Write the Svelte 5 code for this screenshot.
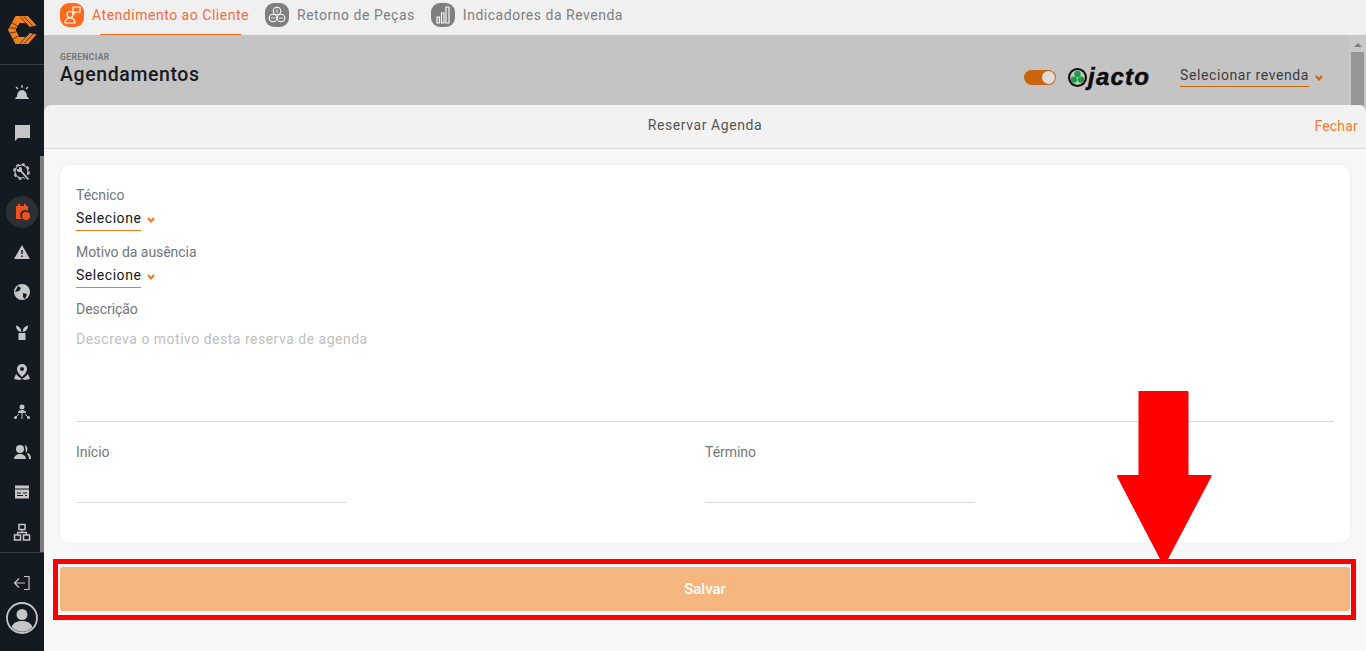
<script>
  const tabs = [
    { label: 'Atendimento ao Cliente', active: true, kind: 'person' },
    { label: 'Retorno de Peças', active: false, kind: 'hex' },
    { label: 'Indicadores da Revenda', active: false, kind: 'bars' }
  ];
  const navTop = ['alarm', 'chat', 'gear', 'calendar', 'warn', 'globe', 'plant', 'pin', 'tree', 'users', 'date', 'org'];
</script>

{#snippet chevron(color)}
  <svg class="chev" width="8" height="6" viewBox="0 0 8 6" fill="none" stroke={color} stroke-width="2">
    <path d="M1 1l3 3.500L7 1" />
  </svg>
{/snippet}

<div class="app">
  <aside class="sidebar">
    <div class="logo">
      <svg width="30" height="30" viewBox="0 0 30 30">
        <path d="M8.500 1h12.500l8.500 9.500-7 1.500-4-4h-6l-4 7 4 7h6l4-4 7 1.500-8.500 9.500H8.500L1 15z" fill="#f0801a" />
        <path d="M13 1.500l9 10M17 1.500l9 10M5 8l7 4M3 13h6M3 18l6-1M6 24l7-4M13 28.500l9-9.500M17 28.500l9-9.500" stroke="#141a22" stroke-width="0.700" fill="none" />
      </svg>
    </div>
    <nav class="nav">
      {#each navTop as item}
        <div class="nav-item" class:current={item === 'calendar'}>
          <svg width="18" height="18" viewBox="0 0 18 18" fill={item === 'calendar' ? '#f4511e' : '#c4c6c8'}>
            {#if item === 'alarm'}
              <path d="M2 16l1-2h1c0-4 2-7 5-7s5 3 5 7h1l1 2z" />
              <path d="M9 2v3M3 4l2 2M15 4l-2 2" stroke="#c4c6c8" stroke-width="1.300" />
            {:else if item === 'chat'}
              <path d="M2 2h15v13H5l-3 3z" />
            {:else if item === 'gear'}
              <circle cx="8.500" cy="8.500" r="6.500" fill="none" stroke="#c4c6c8" stroke-width="1.200" />
              <circle cx="8.500" cy="8.500" r="7.600" fill="none" stroke="#c4c6c8" stroke-width="1.500" stroke-dasharray="3 3" />
              <path d="M6.500 6.500l9 10" stroke="#141a22" stroke-width="4" />
              <path d="M6.500 6.500l9 10" stroke="#c4c6c8" stroke-width="1.800" />
              <circle cx="6.300" cy="6.300" r="2.600" />
              <circle cx="5" cy="5" r="1.300" fill="#141a22" />
            {:else if item === 'calendar'}
              <path d="M3 3h2V1h2v2h4V1h2v2h2v5a5 5 0 0 0-6 8H3z" />
              <circle cx="13" cy="13" r="4" />
            {:else if item === 'warn'}
              <path d="M9 2l8 14H1z" />
              <path d="M9 7v4M9 12.500v1.500" stroke="#141a22" stroke-width="1.500" />
            {:else if item === 'globe'}
              <circle cx="9" cy="9" r="8" />
              <path d="M5 3l3 2-2 3-4 1zM10 10l4 1-2 5-2-2z" fill="#141a22" />
            {:else if item === 'plant'}
              <path d="M5.500 10h7v7h-7z" />
              <path d="M8.500 9C8 5 6 3 3 2.500 3 6 5 9 8.500 9zM9.500 9c.5-4 2.500-6 5.500-6.500C15 6 13 9 9.500 9z" />
            {:else if item === 'pin'}
              <path d="M9 1a5 5 0 0 1 5 5c0 3-3 6-5 8-2-2-5-5-5-8a5 5 0 0 1 5-5z" />
              <circle cx="9" cy="6" r="2" fill="#141a22" />
              <path d="M3 11l3 3 3 2 3-2 3-3 2 5-5 1-3-1-3 1-5-1z" />
            {:else if item === 'tree'}
              <circle cx="9" cy="4" r="2.500" />
              <path d="M5 10c0-2 2-3 4-3s4 1 4 3z" />
              <path d="M9 10v6M3 14l3-3M15 14l-3-3" stroke="#c4c6c8" stroke-width="1" />
              <circle cx="2.500" cy="14.500" r="1.500" />
              <circle cx="15.500" cy="14.500" r="1.500" />
            {:else if item === 'users'}
              <circle cx="7" cy="6" r="4" />
              <path d="M1 16c0-3 3-5 6-5s6 2 6 5z" />
              <path d="M12 2c3 1 3 6 1 8M15 10c2 1 3 3 3 6h-2c0-2-1-4-2-5z" />
            {:else if item === 'date'}
              <path d="M2 2.500h14v13H2z" />
              <path d="M2 6h14" stroke="#141a22" stroke-width="1" />
              <path d="M4 10h4M10 10h4M4 12.500h6M12 12.500h2" stroke="#141a22" stroke-width="1" />
            {:else}
              <path d="M6 1.500h6v5H6zM1.500 12h6v5h-6zM10.500 12h6v5h-6z" fill="none" stroke="#c4c6c8" stroke-width="1.500" />
              <path d="M9 6.500V9.500H4.500V12M9 9.500h4.500V12" fill="none" stroke="#c4c6c8" stroke-width="1.300" />
            {/if}
          </svg>
        </div>
      {/each}
      <div class="side-scroll"></div>
    </nav>
    <div class="side-bottom">
      <svg class="logout" width="18" height="16" viewBox="0 0 18 16" fill="none" stroke="#c4c6c8" stroke-width="1.200">
        <path d="M11 1.500h5v13h-5M12 8H1.500M6 3.500L1.500 8 6 12.500" />
      </svg>
      <svg width="32" height="32" viewBox="0 0 32 32">
        <circle cx="16" cy="16" r="15" fill="none" stroke="#c4c6c8" stroke-width="1.800" />
        <circle cx="16" cy="12.500" r="5.500" fill="#c4c6c8" />
        <path d="M5.500 25c2-4.500 6-6 10.500-6s8.500 1.500 10.500 6a14 14 0 0 1-21 0z" fill="#c4c6c8" />
      </svg>
    </div>
  </aside>

  <main class="main">
    <div class="tabs">
      {#each tabs as tab}
        <div class="tab" class:active={tab.active}>
          <span class="tab-icon">
            <svg width="20" height="20" viewBox="0 0 20 20" fill="none" stroke="#fff" stroke-width="1.100">
              {#if tab.kind === 'person'}
                <circle cx="8" cy="9.500" r="3" />
                <path d="M3 18c0-3.500 2-5 5-5s5 1.500 5 5z" />
                <path d="M11 2h7v5h-4l-2 1.500V7h-1z" />
              {:else if tab.kind === 'hex'}
                <circle cx="10" cy="6" r="3.800" />
                <circle cx="6" cy="13" r="3.800" />
                <circle cx="14" cy="13" r="3.800" />
                <path d="M10 4v4M4 13h4M12 13h4" stroke-width="0.800" />
              {:else}
                <path d="M4 12h2.500v6H4zM8.500 8H11v10H8.500zM13 2h3v16h-3z" />
              {/if}
            </svg>
          </span>
          <span class="tab-label">{tab.label}</span>
        </div>
      {/each}
    </div>

    <header class="page-head">
      <div class="titles">
        <small>GERENCIAR</small>
        <h1>Agendamentos</h1>
      </div>
      <div class="head-right">
        <span class="toggle"><span class="knob"></span></span>
        <svg class="clover" width="19" height="19" viewBox="1 1 18 18">
          <circle cx="10" cy="10" r="9" fill="#0b0b0b" />
          <circle cx="10" cy="10" r="7" fill="#c4c4c4" />
          <circle cx="10" cy="6.600" r="3" fill="#1f9b45" />
          <circle cx="6.700" cy="12" r="3" fill="#1f9b45" />
          <circle cx="13.300" cy="12" r="3" fill="#1f9b45" />
        </svg>
        <span class="brand">jacto</span>
        <div class="revenda">
          <span class="revenda-text">Selecionar revenda</span>
          {@render chevron('#c9650f')}
        </div>
      </div>
      <div class="head-scroll">
        <span class="scroll-up"></span>
        <div class="thumb"></div>
      </div>
    </header>

    <section class="modal">
      <div class="modal-head">
        <span class="modal-title">Reservar Agenda</span>
        <span class="close">Fechar</span>
      </div>
      <div class="modal-body">
        <form class="card">
          <div class="field">
            <span class="label">Técnico</span>
            <div class="select"><span class="select-text">Selecione</span>{@render chevron('#f07a16')}</div>
          </div>
          <div class="field">
            <span class="label">Motivo da ausência</span>
            <div class="select"><span class="select-text">Selecione</span>{@render chevron('#f07a16')}</div>
          </div>
          <div class="field desc">
            <span class="label">Descrição</span>
            <span class="placeholder">Descreva o motivo desta reserva de agenda</span>
          </div>
          <div class="dates">
            <div class="date-field">
              <span class="label">Início</span>
              <div class="date-line"></div>
            </div>
            <div class="date-field">
              <span class="label">Término</span>
              <div class="date-line"></div>
            </div>
          </div>
        </form>
        <button class="save" type="button">Salvar</button>
      </div>
    </section>
  </main>

  <div class="mark-box"></div>
  <svg class="mark-arrow" width="96" height="172" viewBox="0 0 96 172">
    <path d="M22.500 0h49a1 1 0 0 1 1 1v83h22a1 1 0 0 1 1 1.500L52 168h-8L1 85.500A1 1 0 0 1 2 84h20.500V1a1 1 0 0 1 0-1z" fill="#ff0000" />
  </svg>
</div>

<style>
  :global(body) {
    margin: 0;
    overflow: hidden;
  }

  .app {
    position: relative;
    display: flex;
    width: 1366px;
    height: 651px;
    overflow: hidden;
    font-family: 'Roboto', 'Liberation Sans', sans-serif;
    background: #f7f7f7;
  }

  .sidebar {
    display: flex;
    flex-direction: column;
    flex: 0 0 44px;
    background: #141a22;
  }

  .logo {
    display: flex;
    flex: 0 0 65px;
    align-items: center;
    justify-content: center;
    padding-bottom: 5px;
    box-sizing: border-box;
    border-bottom: 1px solid #3a3d42;
  }

  .nav {
    position: relative;
    display: flex;
    flex: 0 0 487px;
    flex-direction: column;
    align-items: center;
    padding-top: 7px;
    box-sizing: border-box;
    border-bottom: 1px solid #3a3d42;
  }

  .nav-item {
    display: flex;
    flex: 0 0 40px;
    align-items: center;
    justify-content: center;
    width: 32px;
    height: 40px;
    margin-left: -1px;
  }

  .nav-item.current {
    flex: 0 0 32px;
    height: 32px;
    margin: 4px 0 4px -1px;
    border-radius: 50%;
    background: #2c2f33;
  }

  .side-scroll {
    position: absolute;
    right: 0;
    top: 91px;
    width: 4px;
    height: 396px;
    background: #7d7d7d;
  }

  .side-bottom {
    display: flex;
    flex: 1;
    flex-direction: column;
    align-items: center;
    gap: 11px;
    padding-top: 22px;
  }

  .main {
    display: flex;
    flex: 1;
    flex-direction: column;
    min-width: 0;
    background: #c4c4c4;
  }

  .tabs {
    display: flex;
    flex: 0 0 35px;
    padding-left: 16px;
    gap: 16px;
    box-sizing: border-box;
    background: #f0f0f0;
  }

  .tab {
    display: flex;
    align-items: flex-start;
    gap: 8px;
    padding-top: 3px;
    color: #7f7f7f;
    font-size: 14px;
    letter-spacing: 0.52px;
  }

  .tab-icon {
    display: flex;
    align-items: center;
    justify-content: center;
    width: 24px;
    height: 24px;
    border-radius: 9px;
    background: #7f7f7f;
  }

  .tab.active .tab-icon {
    background: #ff6a1f;
  }

  .tab-label {
    position: relative;
    height: 32px;
    padding-top: 4px;
    box-sizing: border-box;
    line-height: 17px;
  }

  .tab.active {
    color: #fb6a3c;
  }

  /* underline is shorter than the label */
  .tab.active .tab-label::after {
    content: '';
    position: absolute;
    left: 8px;
    right: 8px;
    bottom: 0;
    height: 1px;
    background: #ff6a1f;
  }

  .page-head {
    display: flex;
    flex: 0 0 70px;
    justify-content: space-between;
    box-sizing: border-box;
    padding: 17px 0 0 16px;
    background: #c4c4c4;
  }

  .titles small {
    display: block;
    color: #777;
    font-size: 8.500px;
    font-weight: 700;
    line-height: 10px;
    letter-spacing: 0.4px;
  }

  .titles h1 {
    margin: 2px 0 0;
    color: #17191c;
    font-size: 19.500px;
    font-weight: 500;
    line-height: 22px;
    letter-spacing: 0.6px;
  }

  .head-right {
    display: flex;
    align-items: flex-start;
    margin-left: auto;
    padding: 13px 26px 0 0;
  }

  .toggle {
    display: flex;
    align-items: center;
    justify-content: flex-end;
    width: 32px;
    height: 15px;
    margin: 5px 12px 0 0;
    padding-right: 1px;
    box-sizing: border-box;
    border-radius: 8px;
    background: #c9650f;
  }

  .knob {
    width: 13px;
    height: 13px;
    border-radius: 50%;
    background: #dcdcdc;
  }

  .clover {
    margin: 3px 1px 0 0;
  }

  .brand {
    width: 63px;
    height: 22px;
    margin: 1px 29px 0 0;
    color: #0b0b0b;
    font-family: 'Liberation Sans', sans-serif;
    font-size: 24px;
    font-style: italic;
    font-weight: 700;
    line-height: 22px;
    letter-spacing: 1.2px;
    -webkit-text-stroke: 0.5px #0b0b0b;
  }

  .revenda {
    display: flex;
    align-items: flex-start;
  }

  .revenda-text {
    height: 20px;
    margin-top: 1px;
    border-bottom: 1px solid #c9650f;
    color: #3c3c3c;
    font-size: 14px;
    line-height: 18px;
    letter-spacing: 0.6px;
  }

  .revenda .chev {
    margin: 10px 0 0 6px;
  }

  .head-scroll {
    position: relative;
    flex: 0 0 17px;
    height: 70px;
    margin-top: -17px;
    background: #c8c8c8;
  }

  .scroll-up {
    position: absolute;
    left: 5px;
    top: 8px;
    border-left: 4px solid transparent;
    border-right: 4px solid transparent;
    border-bottom: 4px solid #7d7d7d;
  }

  .thumb {
    position: absolute;
    left: 2px;
    top: 17px;
    width: 13px;
    height: 53px;
    background: #969696;
  }

  .modal {
    display: flex;
    flex: 1;
    flex-direction: column;
    border-radius: 8px 8px 0 0;
    background: #f7f7f7;
  }

  .modal-head {
    position: relative;
    display: flex;
    flex: 0 0 44px;
    align-items: center;
    justify-content: center;
    box-sizing: border-box;
    padding-bottom: 4px;
    border-radius: 8px 8px 0 0;
    border-bottom: 1px solid #dcdcdc;
    background: #f2f2f2;
    color: #555;
    font-size: 14px;
    letter-spacing: 0.57px;
  }

  .close {
    position: absolute;
    right: 8px;
    top: 13px;
    color: #ff7a2a;
    font-size: 14px;
    letter-spacing: 0.2px;
  }

  .modal-body {
    display: flex;
    flex-direction: column;
    padding: 16px 16px 0;
  }

  .card {
    display: flex;
    flex-direction: column;
    height: 378px;
    padding: 22px 16px 0;
    box-sizing: border-box;
    border-radius: 10px;
    background: #fff;
    box-shadow: 0 0 3px rgba(0, 0, 0, 0.06);
  }

  .field {
    display: flex;
    flex-direction: column;
    align-items: flex-start;
    height: 57px;
  }

  .label {
    color: #71767d;
    font-size: 14px;
    line-height: 17px;
    letter-spacing: -0.05px;
  }

  .select {
    display: flex;
    align-items: flex-start;
    margin-top: 6px;
  }

  .select-text {
    height: 20px;
    border-bottom: 1px solid #f07a16;
    color: #17191c;
    font-size: 14px;
    line-height: 17px;
    letter-spacing: 0.55px;
  }

  .select .chev {
    margin: 7px 0 0 6px;
  }

  .desc {
    flex: 0 0 121px;
    height: 121px;
    box-sizing: border-box;
    border-bottom: 1px solid #d8d8d8;
  }

  .placeholder {
    margin-top: 13px;
    color: #c0c0c0;
    font-size: 14px;
    line-height: 17px;
    letter-spacing: 0.5px;
  }

  .dates {
    display: flex;
    margin-top: 20px;
  }

  .date-field {
    flex: 0 0 629px;
  }

  .date-line {
    width: 270px;
    height: 41px;
    border-bottom: 1px solid #d8d8d8;
  }

  .save {
    height: 44px;
    margin-top: 24px;
    padding: 0;
    border: 0;
    border-radius: 3px;
    background: #f5b77f;
    color: #fff;
    font-family: inherit;
    font-size: 15px;
    font-weight: 500;
  }

  /* red annotation over the screenshot */
  .mark-box {
    position: absolute;
    left: 53px;
    top: 559px;
    width: 1303px;
    height: 61px;
    box-sizing: border-box;
    border: 5px solid #ff0000;
  }

  .mark-arrow {
    position: absolute;
    left: 1116px;
    top: 391px;
  }
</style>
